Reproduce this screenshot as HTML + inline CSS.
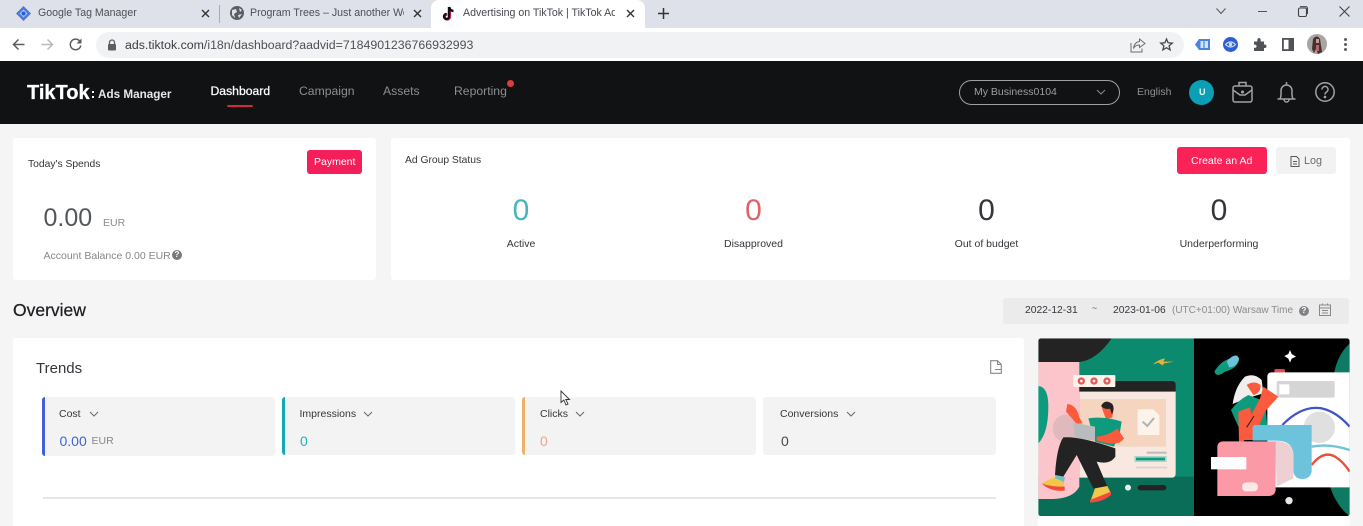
<!DOCTYPE html>
<html><head><meta charset="utf-8">
<style>
html,body{margin:0;padding:0;width:1363px;height:526px;overflow:hidden;background:#f5f5f5;font-family:"Liberation Sans",sans-serif;}
#w{position:absolute;left:0;top:0;width:1363px;height:526px;overflow:hidden;filter:blur(.3px);}
.a{position:absolute;white-space:nowrap;line-height:1;}
.b{position:absolute;}
svg{position:absolute;overflow:visible;}
</style></head><body><div id="w">
<div class="b" style="left:0;top:0;width:1363px;height:28px;background:#dee1ea"></div>
<div class="b" style="left:0;top:28px;width:1363px;height:33px;background:#fff"></div>
<div class="b" style="left:431px;top:0;width:214px;height:28px;background:#fff;border-radius:8px 8px 0 0"></div>
<div class="b" style="left:96px;top:32px;width:1088px;height:26px;background:#f0f2f4;border-radius:13px"></div>
<div class="b" style="left:219px;top:5px;width:1px;height:18px;background:#a9abb0"></div>

<!-- tabs -->
<svg style="left:16px;top:6px" width="15" height="15" viewBox="0 0 15 15"><path d="M7.500 0 15 7.500 7.500 15 0 7.500Z" fill="#4b78dc"/><path d="M7.500 3.500 11.500 7.500 7.500 11.500 3.500 7.500Z" fill="#a8c7f5"/><circle cx="7.500" cy="7.500" r="2" fill="#2f5fc4"/></svg>
<div class="a" style="left:38px;top:8px;font-size:10.600px;color:#4c4f55">Google Tag Manager</div>
<svg style="left:201px;top:9px" width="9" height="9"><path d="M1 1 8 8M8 1 1 8" stroke="#333" stroke-width="1.400"/></svg>
<svg style="left:230px;top:6px" width="14" height="14" viewBox="0 0 14 14"><circle cx="7" cy="7" r="7" fill="#5a5d63"/><path d="M2 4 6 3 7 6 4 8 5 12 2 9ZM9 2 12 4 10 6ZM8 9 12 8 9 12Z" fill="#dee1ea"/></svg>
<div class="a" style="left:250px;top:8px;font-size:10.600px;color:#4c4f55;width:154px;overflow:hidden">Program Trees – Just another Wo</div>
<svg style="left:413px;top:9px" width="9" height="9"><path d="M1 1 8 8M8 1 1 8" stroke="#333" stroke-width="1.400"/></svg>
<svg style="left:442px;top:6px" width="13" height="15" viewBox="0 0 13 15"><path d="M7 1V10.500A2.500 2.500 0 1 1 4.500 8" fill="none" stroke="#ee1d52" stroke-width="2.400" transform="translate(.8 .4)"/><path d="M7 1V10.500A2.500 2.500 0 1 1 4.500 8M7 1C7.500 3.500 9 4.800 11.500 5" fill="none" stroke="#111" stroke-width="2.400"/></svg>
<div class="a" style="left:463px;top:8px;font-size:10.600px;color:#45484e;width:152px;overflow:hidden">Advertising on TikTok | TikTok Ad</div>
<svg style="left:626px;top:9px" width="9" height="9"><path d="M1 1 8 8M8 1 1 8" stroke="#333" stroke-width="1.400"/></svg>
<svg style="left:658px;top:8px" width="11" height="11"><path d="M5.500 0V11M0 5.500H11" stroke="#333" stroke-width="1.500"/></svg>
<!-- window controls -->
<svg style="left:1216px;top:8px" width="10" height="7"><path d="M.5 .5 5 5.500 9.500 .5" fill="none" stroke="#555"/></svg>
<div class="b" style="left:1258px;top:11px;width:9px;height:1px;background:#555"></div>
<svg style="left:1298px;top:6px" width="10" height="11"><rect x=".5" y="2" width="8" height="8.500" rx="1.500" fill="none" stroke="#444" stroke-width="1.100"/><path d="M2 .6H7.500Q9.500 .6 9.500 2.500V8" fill="none" stroke="#444"/></svg>
<svg style="left:1339px;top:6px" width="11" height="11"><path d="M.5 .5 10.500 10.500M10.500 .5 .5 10.500" stroke="#444" stroke-width="1.100"/></svg>

<!-- toolbar -->
<svg style="left:12px;top:38px" width="13" height="13"><path d="M12.500 6.500H1.500M6.500 1.500 1.500 6.500 6.500 11.500" fill="none" stroke="#5a5d63" stroke-width="1.500"/></svg>
<svg style="left:41px;top:38px" width="13" height="13"><path d="M.5 6.500H11.500M6.500 1.500 11.500 6.500 6.500 11.500" fill="none" stroke="#b8babd" stroke-width="1.500"/></svg>
<svg style="left:69px;top:38px" width="13" height="13" viewBox="0 0 13 13"><path d="M11 3.500A5.300 5.300 0 1 0 11.800 7.500" fill="none" stroke="#5a5d63" stroke-width="1.500"/><path d="M12.500 .5V5.500H7.500Z" fill="#5a5d63"/></svg>
<svg style="left:107px;top:39px" width="10" height="12"><path d="M2.500 5V3.500A2.500 2.500 0 0 1 7.500 3.500V5" fill="none" stroke="#5a5d63" stroke-width="1.300"/><rect x="1" y="5" width="8" height="6.500" rx="1" fill="#5a5d63"/></svg>
<div class="a" style="left:125px;top:39px;font-size:12.350px;color:#4d5156"><span style="color:#3b3e43">ads.tiktok.com</span>/i18n/dashboard?aadvid=7184901236766932993</div>
<svg style="left:1130px;top:38px" width="16" height="15" viewBox="0 0 16 15"><path d="M9.500 1 15 5.500 9.500 9.500V7C6 7 4.500 8.500 3.500 10.500 4 6.500 6 4 9.500 3.500ZM1 5V14H12V10.500" fill="none" stroke="#6a6d72" stroke-width="1"/></svg>
<svg style="left:1160px;top:38px" width="13" height="13" viewBox="0 0 13 13"><path d="M6.500 1 8.100 4.800 12.300 5.100 9.100 7.800 10.100 11.900 6.500 9.700 2.900 11.900 3.900 7.800 .7 5.100 4.900 4.800Z" fill="none" stroke="#45484d" stroke-width="1.300"/></svg>
<svg style="left:1195px;top:38px" width="15" height="13" viewBox="0 0 15 13"><path d="M0 6.500 4 1H15V12H4Z" fill="#4a84dc"/><rect x="5.500" y="3" width="7.500" height="7" fill="#d5e3f7"/><path d="M9 3V10" stroke="#4a84dc" stroke-width="1.200"/></svg>
<svg style="left:1223px;top:37px" width="15" height="15" viewBox="0 0 15 15"><circle cx="7.500" cy="7.500" r="7.500" fill="#2c5fd4"/><path d="M2.500 7.500Q7.500 2.500 12.500 7.500 7.500 12.500 2.500 7.500Z" fill="none" stroke="#cfe0fb" stroke-width="1.200"/><circle cx="7.500" cy="7.500" r="1.700" fill="#cfe0fb"/></svg>
<svg style="left:1253px;top:38px" width="13" height="13" viewBox="0 0 13 13"><path d="M1 3.500H4.300Q4 0 6 0T7.700 3.500H11V6.500Q13.500 6.200 13.500 8.200T11 10V13H1V9.800Q3.500 10.300 3.500 8.300T1 6.700Z" fill="#505358"/></svg>
<svg style="left:1282px;top:38px" width="12" height="13"><rect x=".9" y=".9" width="10.200" height="11.200" fill="#fff" stroke="#505358" stroke-width="1.800"/><rect x="6.500" y="1" width="5" height="11" fill="#505358"/></svg>
<svg style="left:1307px;top:34px" width="20" height="20" viewBox="0 0 20 20"><circle cx="10" cy="10" r="10" fill="#a9a5a3"/><path d="M6 5Q10 0 13 5L15 18 11 20 9 15 7 19 5 15Z" fill="#4a2f30"/><path d="M9 5H12V9H9Z" fill="#c79a8e"/><path d="M9 11 12 11 12 17 9 17Z" fill="#b06a70"/></svg>
<div class="b" style="left:1344px;top:38px;width:3px;height:3px;border-radius:50%;background:#5a5d63;box-shadow:0 5px #5a5d63,0 10px #5a5d63"></div>

<!-- header -->
<div class="b" style="left:0;top:61px;width:1363px;height:63px;background:#111214"></div>
<div class="a" style="left:27px;top:83px;font-size:20px;font-weight:bold;color:#fff;-webkit-text-stroke:.3px #fff">TikTok</div>
<div class="b" style="left:92px;top:91px;width:2px;height:2px;background:#fff;box-shadow:0 5px #fff"></div>
<div class="a" style="left:98px;top:89px;font-size:11.700px;font-weight:bold;color:#e8e8e8">Ads Manager</div>
<div class="a" style="left:210.500px;top:85px;font-size:12.200px;color:#fff;-webkit-text-stroke:.25px #fff">Dashboard</div>
<div class="b" style="left:227px;top:105px;width:26px;height:2px;border-radius:1px;background:#d7263d"></div>
<div class="a" style="left:299px;top:85px;font-size:12.200px;color:#8d8e90">Campaign</div>
<div class="a" style="left:383px;top:85px;font-size:12.200px;color:#8d8e90">Assets</div>
<div class="a" style="left:454px;top:85px;font-size:12.200px;color:#8d8e90">Reporting</div>
<div class="b" style="left:507px;top:80px;width:7px;height:7px;border-radius:50%;background:#e23a3e"></div>
<div class="b" style="left:959px;top:80px;width:159px;height:23px;border:1px solid #a0a0a0;border-radius:13px"></div>
<div class="a" style="left:974px;top:87px;font-size:10.500px;color:#9d9e9f">My Business0104</div>
<svg style="left:1096px;top:89px" width="10" height="6"><path d="M1 1 5 5 9 1" fill="none" stroke="#8a8a8a"/></svg>
<div class="a" style="left:1137px;top:87px;font-size:10.500px;color:#8f9091">English</div>
<div class="b" style="left:1189px;top:80px;width:25px;height:25px;border-radius:50%;background:#0a9fb5"></div>
<div class="a" style="left:1199px;top:88px;font-size:9px;font-weight:bold;color:#e8f5f7">U</div>
<svg style="left:1232px;top:81px" width="21" height="22" viewBox="0 0 21 22" fill="none" stroke="#a2a2a2" stroke-width="1.500"><rect x="1" y="5" width="19" height="16" rx="2"/><path d="M7 5V1.500H14V5M1 9 8 14H13L20 9"/><circle cx="10.500" cy="11" r=".8" fill="#a2a2a2"/></svg>
<svg style="left:1277px;top:82px" width="19" height="21" viewBox="0 0 19 21" fill="none" stroke="#a2a2a2" stroke-width="1.500"><path d="M.5 17H18.500M3 17C4.500 14 4 11 4 8.500A5.500 5.500 0 0 1 15 8.500C15 11 14.500 14 16 17M9.500 0V3M7 17.500A2.500 2.500 0 0 0 12 17.500"/></svg>
<svg style="left:1315px;top:82px" width="20" height="20" viewBox="0 0 20 20" fill="none" stroke="#a2a2a2" stroke-width="1.500"><circle cx="10" cy="10" r="9.200"/><path d="M7 7.500A3 3 0 1 1 11.500 10C10.500 10.700 10 11 10 12.500"/><circle cx="10" cy="15" r=".6" fill="#a2a2a2"/></svg>

<!-- cards top -->
<div class="b" style="left:13px;top:138px;width:363px;height:142px;background:#fff;border-radius:3px"></div>
<div class="b" style="left:391px;top:138px;width:959px;height:142px;background:#fff;border-radius:3px"></div>
<div class="a" style="left:28px;top:160px;font-size:10.300px;color:#33363a">Today's Spends</div>
<div class="b" style="left:307px;top:150px;width:55px;height:24px;background:#f41f5a;border-radius:3px"></div>
<div class="a" style="left:314px;top:157px;font-size:10.500px;color:#fff">Payment</div>
<div class="a" style="left:43.500px;top:206px;font-size:25px;color:#53565a">0.00</div>
<div class="a" style="left:103px;top:218px;font-size:10.500px;color:#8a8c8f">EUR</div>
<div class="a" style="left:43.500px;top:251px;font-size:10.500px;color:#85878a">Account Balance 0.00 EUR</div>
<div class="b" style="left:172px;top:250px;width:10px;height:10px;border-radius:50%;background:#77797c;color:#fff;font-size:8px;line-height:10px;text-align:center;font-weight:bold">?</div>

<div class="a" style="left:405px;top:156px;font-size:10.300px;color:#33363a">Ad Group Status</div>
<div class="b" style="left:1177px;top:147px;width:90px;height:27px;background:#fb2258;border-radius:3px"></div>
<div class="a" style="left:1191px;top:156px;font-size:10.500px;color:#fff">Create an Ad</div>
<div class="b" style="left:1276px;top:147px;width:60px;height:27px;background:#f2f2f2;border-radius:3px"></div>
<svg style="left:1290px;top:156px" width="10" height="11"><path d="M1 .5H6.500L9 3V10.500H1ZM3 5.500H7M3 8H7" fill="none" stroke="#55585c"/></svg>
<div class="a" style="left:1304px;top:156px;font-size:10.800px;color:#6a6c70">Log</div>

<div class="a" style="left:511px;top:196px;width:20px;text-align:center;font-size:30px;color:#4db4bc">0</div>
<div class="a" style="left:471px;top:239px;width:100px;text-align:center;font-size:10.500px;color:#33363a">Active</div>
<div class="a" style="left:743.500px;top:196px;width:20px;text-align:center;font-size:30px;color:#e0636a">0</div>
<div class="a" style="left:703.500px;top:239px;width:100px;text-align:center;font-size:10.500px;color:#33363a">Disapproved</div>
<div class="a" style="left:976.500px;top:196px;width:20px;text-align:center;font-size:30px;color:#33363a">0</div>
<div class="a" style="left:936.500px;top:239px;width:100px;text-align:center;font-size:10.500px;color:#33363a">Out of budget</div>
<div class="a" style="left:1209px;top:196px;width:20px;text-align:center;font-size:30px;color:#33363a">0</div>
<div class="a" style="left:1169px;top:239px;width:100px;text-align:center;font-size:10.500px;color:#33363a">Underperforming</div>

<!-- overview -->
<div class="a" style="left:13px;top:302px;font-size:17.500px;color:#1c1e21;-webkit-text-stroke:.25px #1c1e21">Overview</div>
<div class="b" style="left:1003px;top:298px;width:346px;height:26px;background:#ebebeb;border-radius:3px"></div>
<div class="a" style="left:1025px;top:306px;font-size:10.300px;color:#33363a">2022-12-31</div>
<div class="a" style="left:1092px;top:304px;font-size:9px;color:#55585c">~</div>
<div class="a" style="left:1113px;top:306px;font-size:10.300px;color:#33363a">2023-01-06</div>
<div class="a" style="left:1172px;top:306px;font-size:10px;color:#8a8c8f">(UTC+01:00) Warsaw Time</div>
<div class="b" style="left:1299px;top:306px;width:10px;height:10px;border-radius:50%;background:#808285;color:#fff;font-size:8px;line-height:10px;text-align:center;font-weight:bold">?</div>
<svg style="left:1319px;top:303px" width="12" height="13"><path d="M.5 2H11.500V12.500H.5ZM.5 5H11.500M3 7.500H9M3 10H9M3.500 .5V2M8.500 .5V2" fill="none" stroke="#86888b"/></svg>

<!-- trends -->
<div class="b" style="left:13px;top:338px;width:1011px;height:188px;background:#fff;border-radius:3px 3px 0 0"></div>
<div class="a" style="left:36px;top:361px;font-size:15px;color:#33363a">Trends</div>
<svg style="left:990px;top:360px" width="12" height="14"><path d="M.7 .7H7.500L11.300 4.500V13.300H.7ZM7.500 .7V4.500H11.300M5 9.500H11.500" fill="none" stroke="#85878a" stroke-width="1.100"/></svg>
<div class="b" style="left:42px;top:397px;width:233px;height:59px;background:#f3f3f3;border-radius:3px;border-left:3px solid #3f5fdc;box-sizing:border-box"></div>
<div class="b" style="left:282px;top:397px;width:233px;height:58px;background:#f3f3f3;border-radius:3px;border-left:3px solid #12a8b5;box-sizing:border-box"></div>
<div class="b" style="left:522px;top:397px;width:234px;height:58px;background:#f3f3f3;border-radius:3px;border-left:3px solid #edb268;box-sizing:border-box"></div>
<div class="b" style="left:763px;top:397px;width:233px;height:58px;background:#f3f3f3;border-radius:3px"></div>
<div class="a" style="left:59px;top:409px;font-size:10.500px;color:#33363a">Cost</div>
<svg style="left:89px;top:411px" width="10" height="6"><path d="M1 1 5 5 9 1" fill="none" stroke="#66686c"/></svg>
<div class="a" style="left:299.500px;top:409px;font-size:10.500px;color:#33363a">Impressions</div>
<svg style="left:363px;top:411px" width="10" height="6"><path d="M1 1 5 5 9 1" fill="none" stroke="#66686c"/></svg>
<div class="a" style="left:540px;top:409px;font-size:10.500px;color:#33363a">Clicks</div>
<svg style="left:575px;top:411px" width="10" height="6"><path d="M1 1 5 5 9 1" fill="none" stroke="#66686c"/></svg>
<div class="a" style="left:780px;top:409px;font-size:10.500px;color:#33363a">Conversions</div>
<svg style="left:846px;top:411px" width="10" height="6"><path d="M1 1 5 5 9 1" fill="none" stroke="#66686c"/></svg>
<div class="a" style="left:59.500px;top:434px;font-size:14px;color:#3f63dc">0.00</div>
<div class="a" style="left:91.500px;top:436px;font-size:10.500px;color:#85878a">EUR</div>
<div class="a" style="left:300px;top:434px;font-size:14px;color:#1fb3bf">0</div>
<div class="a" style="left:540px;top:434px;font-size:14px;color:#f0a08e">0</div>
<div class="a" style="left:781px;top:434px;font-size:14px;color:#44474b">0</div>
<div class="b" style="left:43px;top:497px;width:953px;height:1.500px;background:#e6e6e6"></div>
<svg style="left:560px;top:390px" width="11" height="16" viewBox="0 0 11 16"><path d="M1 1V12.500L3.800 10 6 15 8 14 5.800 9.500H9.500Z" fill="#fff" stroke="#333" stroke-width=".9"/></svg>

<!-- illustration -->
<div class="b" style="left:1038px;top:516px;width:312px;height:10px;background:#fff"></div>
<svg style="left:1030px;top:330px" width="333" height="196" viewBox="0 0 999 588">
<defs><clipPath id="c"><rect x="25" y="25" width="934" height="533" rx="8"/></clipPath></defs>
<g clip-path="url(#c)">
<rect x="25" y="25" width="467" height="533" fill="#0b8a6e"/>
<rect x="25" y="440" width="467" height="118" fill="#0a6d58"/>
<rect x="492" y="25" width="467" height="533" fill="#000"/>
<path d="M25 25H245Q200 90 148 96H25Z" fill="#232323"/>
<path d="M25 96H148V470Q130 505 70 507H25Z" fill="#fcc5cb"/>
<path d="M25 168Q55 170 55 230 55 310 25 340Z" fill="#0e9a7c"/>
<path d="M368 104Q385 88 405 85L400 95 432 95 402 100 398 106 385 98Z" fill="#eab13a"/>
<path d="M148 153H425Q437 153 437 165V185H148Z" fill="#232323"/>
<path d="M148 185H437V430Q437 443 425 443H148Z" fill="#f8e8df"/>
<rect x="148" y="207" width="260" height="143" fill="#f6d5c0"/>
<path d="M323 238H370L388 256V315H323Z" fill="#fdf3ea"/>
<path d="M338 275 352 288 372 264" fill="none" stroke="#aeb4b4" stroke-width="6"/>
<rect x="130" y="135" width="126" height="36" rx="3" fill="#fdf3ea"/>
<circle cx="154" cy="153" r="11" fill="#e05a5a"/><circle cx="192" cy="153" r="11" fill="#e05a5a"/><circle cx="231" cy="153" r="11" fill="#e05a5a"/>
<circle cx="154" cy="153" r="4" fill="#fdf3ea"/><circle cx="192" cy="153" r="4" fill="#fdf3ea"/><circle cx="231" cy="153" r="4" fill="#fdf3ea"/>
<rect x="350" y="365" width="60" height="6" fill="#bbb"/>
<rect x="313" y="378" width="97" height="18" fill="#a8d6cc"/><rect x="318" y="383" width="87" height="8" fill="#0e9a7c"/>
<rect x="318" y="410" width="93" height="5" fill="#d9d2cd"/>
<circle cx="110" cy="295" r="42" fill="#d8b5b8" opacity=".8"/>
<path d="M108 245 112 222Q140 225 148 262L158 280 140 282Q120 258 108 245Z" fill="#fb5a3c"/>
<path d="M215 232Q232 215 250 232L247 262 228 268Z" fill="#fb5a3c"/><path d="M213 228Q225 205 247 222 255 235 246 254L240 236Q225 240 213 228Z" fill="#232323"/>
<path d="M175 265Q225 258 275 275L270 305 252 350 195 335Z" fill="#0e9a7c"/>
<path d="M130 278 195 290V332L135 325Z" fill="#b9bbbd"/>
<path d="M200 320Q240 315 262 295L282 325Q270 345 235 340L200 332Z" fill="#fb5a3c"/>
<path d="M100 322Q150 318 256 355V380Q240 405 200 395L232 470 190 475 140 375 100 440 75 435Q80 350 100 322Z" fill="#232323"/>
<path d="M75 435 105 442 100 465H75Z" fill="#6ac2cf"/>
<path d="M35 460 70 442 100 455 104 482Q60 485 35 460Z" fill="#f2c84a"/><path d="M35 460Q60 470 104 470V482Q60 485 35 460Z" fill="#f24a3c"/>
<path d="M195 475 232 468 243 490Q215 515 180 517Z" fill="#f2c84a"/><path d="M180 510 243 485V495Q215 518 180 517Z" fill="#f24a3c"/>
<circle cx="294" cy="473" r="9" fill="#e4f2ee"/>
<rect x="323" y="465" width="86" height="16" rx="8" fill="#232323"/>
<path d="M959 40Q905 90 908 190H959ZM900 470Q920 530 959 558V470Z" fill="#0e7a62"/>
<path d="M763 78 775 72 780 60 785 72 798 80 785 86 780 98 775 86Z" fill="#fff"/>
<path d="M553 125Q570 95 600 85 625 65 627 90 622 115 585 125 560 145 553 125Z" fill="#0e9a7c"/>
<path d="M590 95Q615 65 627 85 622 110 598 112Z" fill="#6ec3dc"/>
<rect x="733" y="117" width="32" height="16" rx="5" fill="#e5484d"/>
<path d="M712 140Q712 127 725 127H959V472H712Z" fill="#fff"/>
<rect x="740" y="153" width="174" height="50" rx="5" fill="#d5d5d5"/>
<rect x="748" y="163" width="30" height="30" fill="#fff"/>
<path d="M757 285Q815 225 875 235 920 245 959 290" fill="none" stroke="#3f55c8" stroke-width="7"/>
<circle cx="868" cy="292" r="47" fill="#d8d8d8" opacity=".8"/>
<path d="M845 350Q900 340 959 360" fill="none" stroke="#6fc6d6" stroke-width="7"/>
<path d="M845 405Q880 360 915 380 940 395 959 425" fill="none" stroke="#e6503c" stroke-width="7"/>
<path d="M608 222Q615 170 645 140 672 128 695 150L700 190 650 205Z" fill="#f0efee"/>
<path d="M603 240Q625 210 655 195L705 215 712 290H625Z" fill="#0e9a7c"/>
<path d="M650 165Q672 150 692 165 692 190 670 195Z" fill="#fb5a3c"/>
<path d="M625 245 660 232 672 290 640 335H627Z" fill="#fb5a3c"/>
<path d="M640 300 690 205 700 170 745 200 705 245 670 330H640Z" fill="#fb5a3c"/>
<path d="M650 292 672 258" stroke="#222" stroke-width="3"/>
<path d="M668 295Q668 285 675 285H845V425Q840 448 815 447 790 445 790 420V370Q785 332 740 332H668Z" fill="#6ec3dc"/>
<path d="M735 332Q790 335 790 375V445L740 470Z" fill="#eecfd3"/>
<path d="M562 348Q565 334 580 334H737V480Q735 498 715 498H562Z" fill="#fb9aa6"/>
<rect x="543" y="381" width="106" height="37" fill="#fff"/>
<rect x="636" y="457" width="48" height="27" rx="13" fill="#fde8e8"/>
<circle cx="777" cy="512" r="11" fill="#e8e8e8"/>
</g></svg>
</div></body></html>
